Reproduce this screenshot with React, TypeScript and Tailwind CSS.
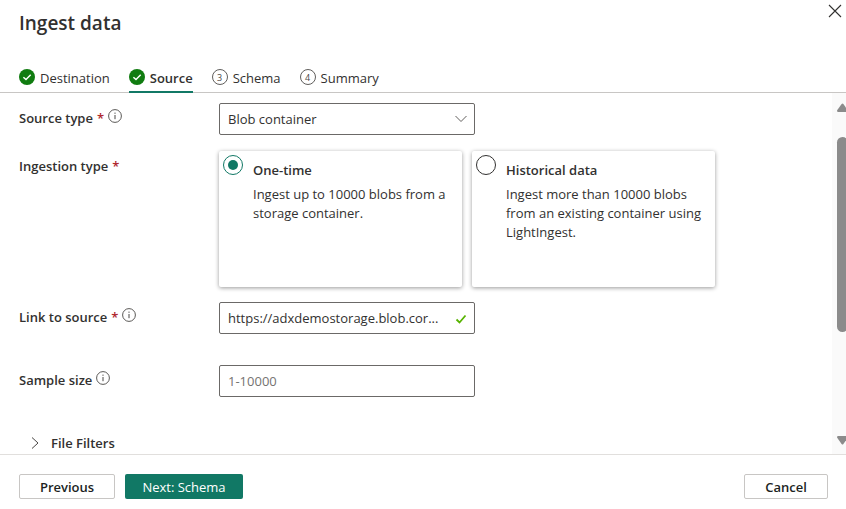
import { useState } from 'react';
import type { ReactNode } from 'react';

const control =
  'h-8 w-full appearance-none rounded-[2px] border border-[#6b6967] bg-white pl-2 text-[13px] text-[#323130] placeholder:text-[#757371] focus:outline-none';

function DoneIcon() {
  return (
    <svg viewBox="0 0 16 16" className="size-4" aria-hidden="true">
      <circle cx="8" cy="8" r="8" fill="#107c10" />
      <path d="M4.4 8.2 7 10.6l4.7-4.9" fill="none" stroke="#fff" strokeWidth="1.4" />
    </svg>
  );
}

function StepNumber({ value }: { value: number }) {
  return (
    <span className="flex size-4 items-center justify-center rounded-full border border-[#605e5c] text-[9px] leading-none text-[#484644]">
      {value}
    </span>
  );
}

function InfoIcon() {
  return (
    <svg viewBox="0 0 14 14" className="mb-[6px] size-[14px]" fill="none" stroke="#484644" aria-hidden="true">
      <circle cx="7" cy="7" r="6.4" strokeWidth="0.9" />
      <path d="M7 6v4.2" strokeWidth="1" />
      <path d="M7 3.6v1.2" strokeWidth="1" />
    </svg>
  );
}

function FieldLabel({ id, text, required, info }: { id: string; text: string; required?: boolean; info?: boolean }) {
  return (
    <label htmlFor={id} className="flex h-8 w-[200px] shrink-0 items-center gap-1 font-semibold">
      <span>{text}</span>
      {required && <span className="text-[#b0282e]">*</span>}
      {info && <InfoIcon />}
    </label>
  );
}

function Step({ icon, label, active }: { icon: ReactNode; label: string; active?: boolean }) {
  return (
    <li className={active ? 'border-b-2 border-[#117865] font-semibold' : 'border-b-2 border-transparent'}>
      <button type="button" className="flex h-7 items-center gap-[5px]">
        {icon}
        <span className="pt-[3px]">{label}</span>
      </button>
    </li>
  );
}

type CardProps = { id: string; title: string; text: string; checked: boolean; onSelect: () => void };

function OptionCard({ id, title, text, checked, onSelect }: CardProps) {
  return (
    <label
      htmlFor={id}
      className="flex h-[136px] w-[243px] gap-[10px] rounded-[2px] bg-white p-1 shadow-[0_1px_4px_rgba(0,0,0,0.4)]"
    >
      <input
        id={id}
        type="radio"
        name="ingestion"
        checked={checked}
        onChange={onSelect}
        className="grid size-5 shrink-0 appearance-none place-content-center rounded-full border border-[#323130] before:size-[10px] before:rounded-full before:content-[''] checked:border-[#117865] checked:before:bg-[#117865]"
      />
      <span className="pt-[6px] leading-[19px]">
        <span className="mb-[5px] block font-semibold">{title}</span>
        <span className="block">{text}</span>
      </span>
    </label>
  );
}

export default function App() {
  const [mode, setMode] = useState('once');
  const [link, setLink] = useState('https://adxdemostorage.blob.cor...');

  return (
    <div className="flex h-screen flex-col overflow-hidden bg-white font-['Open_Sans','Noto_Sans',sans-serif] text-[13px] text-[#323130]">
      <header className="shrink-0 border-b border-[#c8c6c4]">
        <div className="flex h-[63px] justify-between pl-[19px] pr-1">
          <h1 className="pt-[9px] text-[19px] font-semibold leading-7">Ingest data</h1>
          <button type="button" aria-label="Close" className="h-[14px] pt-1">
            <svg viewBox="0 0 14 14" className="size-[14px]" fill="none" stroke="#323130" strokeWidth="1.1" aria-hidden="true">
              <path d="M1 1l12 12M13 1 1 13" />
            </svg>
          </button>
        </div>
        <ol className="-mb-px flex gap-[19px] pl-[19px]">
          <Step icon={<DoneIcon />} label="Destination" />
          <Step icon={<DoneIcon />} label="Source" active />
          <Step icon={<StepNumber value={3} />} label="Schema" />
          <Step icon={<StepNumber value={4} />} label="Summary" />
        </ol>
      </header>

      <div className="flex min-h-0 flex-1">
        <main className="min-w-0 flex-1 overflow-hidden pl-[19px] pt-[10px]">
          <div className="flex">
            <FieldLabel id="source-type" text="Source type" required info />
            <div className="relative w-64">
              <select id="source-type" className={`${control} pt-px`}>
                <option>Blob container</option>
              </select>
              <svg viewBox="0 0 12 8" className="pointer-events-none absolute right-2 top-3 h-2 w-3" fill="none" stroke="#605e5c" aria-hidden="true">
                <path d="M.5 1 6 6.5 11.5 1" />
              </svg>
            </div>
          </div>

          <div className="mt-4 flex" role="radiogroup" aria-labelledby="ingestion-label">
            <div id="ingestion-label" className="flex h-8 w-[200px] shrink-0 items-center gap-1 font-semibold">
              <span>Ingestion type</span>
              <span className="text-[#b0282e]">*</span>
            </div>
            <div className="flex gap-[10px]">
              <OptionCard
                id="once"
                title="One-time"
                text="Ingest up to 10000 blobs from a storage container."
                checked={mode === 'once'}
                onSelect={() => setMode('once')}
              />
              <OptionCard
                id="history"
                title="Historical data"
                text="Ingest more than 10000 blobs from an existing container using LightIngest."
                checked={mode === 'history'}
                onSelect={() => setMode('history')}
              />
            </div>
          </div>

          <div className="mt-[15px] flex">
            <FieldLabel id="link" text="Link to source" required info />
            <div className="relative w-64">
              <input id="link" type="text" value={link} onChange={(e) => setLink(e.target.value)} className={control} />
              <svg viewBox="0 0 12 10" className="pointer-events-none absolute right-2 top-3 h-[10px] w-3" fill="none" stroke="#57b300" strokeWidth="1.8" aria-hidden="true">
                <path d="M1.5 5.5 4.5 8.5 10.5 1.5" />
              </svg>
            </div>
          </div>

          <div className="mt-[31px] flex">
            <FieldLabel id="sample" text="Sample size" info />
            <div className="w-64">
              <input id="sample" type="text" placeholder="1-10000" className={control} />
            </div>
          </div>

          <button type="button" className="ml-3 mt-9 flex items-center gap-3 font-semibold leading-5">
            <svg viewBox="0 0 8 12" className="h-3 w-2" fill="none" stroke="#484644" aria-hidden="true">
              <path d="M1 .5 7 6l-6 5.5" />
            </svg>
            <span>File Filters</span>
          </button>
        </main>

        <div className="flex w-[14px] shrink-0 flex-col overflow-hidden bg-[#fafafa] pb-[9px] pl-[5px] pt-[10px]" aria-hidden="true">
          <svg viewBox="0 0 11 9" className="h-[9px] w-[11px] shrink-0" fill="#8b8b8b">
            <path d="M4.6 1Q5.5 0 6.4 1L11 7.5 10.5 9H.5L0 7.5z" />
          </svg>
          <div className="mb-[104px] mt-[25px] w-[11px] flex-1 rounded-full bg-[#8b8b8b]" />
          <svg viewBox="0 0 11 9" className="h-[9px] w-[11px] shrink-0" fill="#8b8b8b">
            <path d="M4.6 8Q5.5 9 6.4 8L11 1.5 10.5 0H.5L0 1.5z" />
          </svg>
        </div>
      </div>

      <footer className="flex h-[55px] shrink-0 items-center gap-[10px] border-t border-[#e1dfdd] pl-[19px] pr-[18px] pt-[9px] font-semibold text-[#201f1e]">
        <button type="button" className="h-[25px] w-24 rounded-[2px] border border-[#c8c6c4] pt-[2px]">Previous</button>
        <button type="button" className="h-[25px] w-[118px] rounded-[2px] bg-[#117865] pt-[2px] font-medium text-white">Next: Schema</button>
        <button type="button" className="ml-auto h-[25px] w-[84px] rounded-[2px] border border-[#c8c6c4] pt-[2px]">Cancel</button>
      </footer>
    </div>
  );
}
